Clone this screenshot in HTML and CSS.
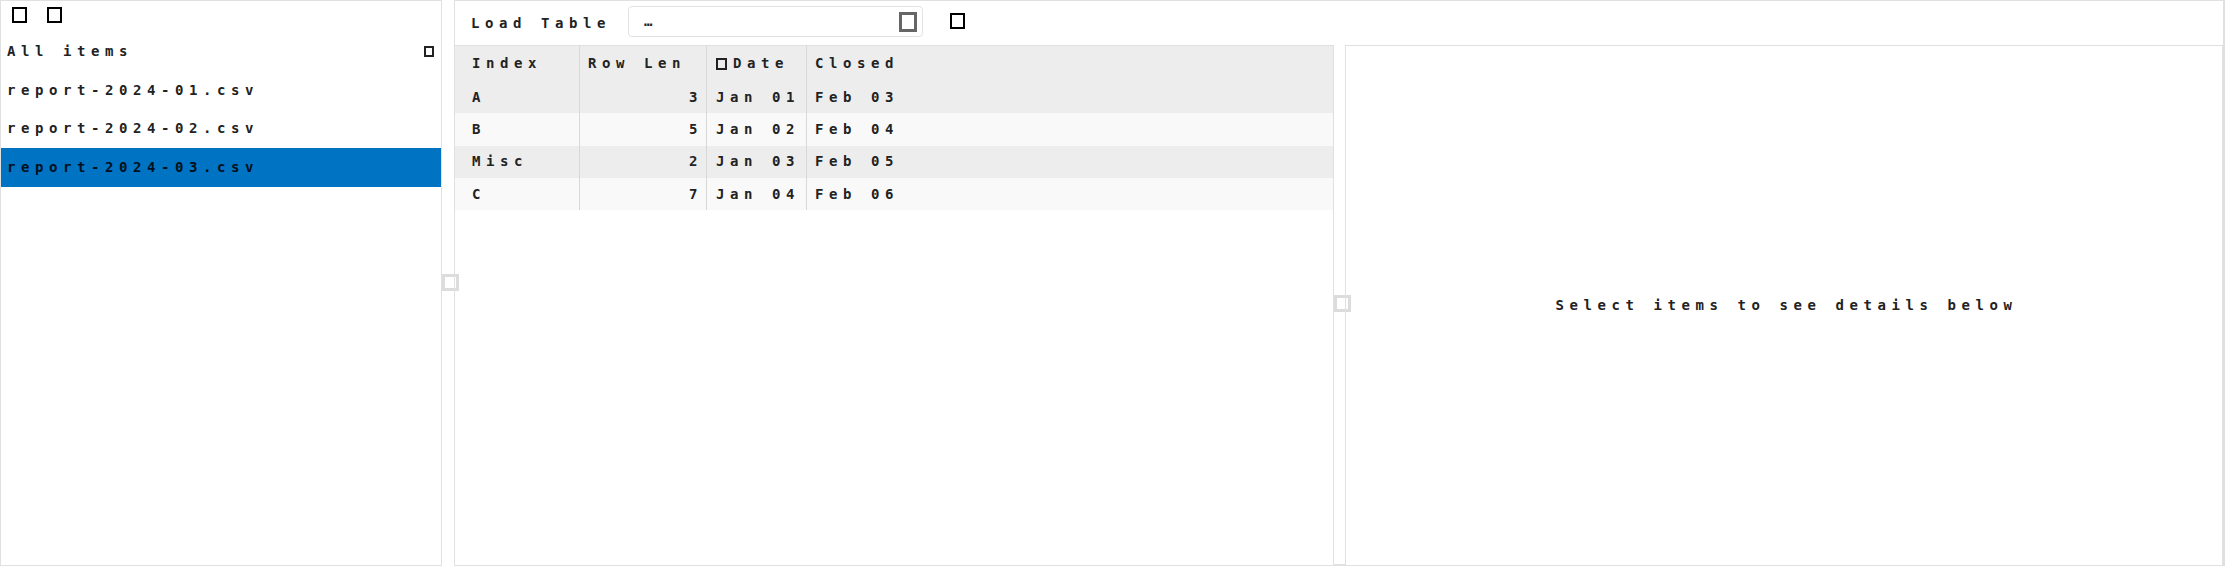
FILE: index.html
```html
<!DOCTYPE html>
<html lang="en">
<head>
<meta charset="utf-8">
<title>Data Browser</title>
<link rel="stylesheet" href="styles.css">
</head>
<body>
<div class="app">
  <aside class="sidebar">
    <div class="side-tools">
      <span class="ico ico-lg"></span>
      <span class="ico ico-lg"></span>
    </div>
    <div class="side-head">
      <span class="txt">All items</span>
      <span class="ico ico-sm"></span>
    </div>
    <ul class="file-list">
      <li class="file"><span class="txt">report-2024-01.csv</span></li>
      <li class="file"><span class="txt">report-2024-02.csv</span></li>
      <li class="file selected"><span class="txt">report-2024-03.csv</span></li>
    </ul>
  </aside>
  <div class="splitter outer"><span class="grip"></span></div>
  <main class="main">
    <div class="toolbar">
      <span class="txt title">Load Table</span>
      <div class="search">
        <span class="txt">…</span>
        <span class="ico ico-clear"></span>
      </div>
      <span class="ico ico-lg"></span>
    </div>
    <div class="panes">
      <section class="table-pane">
        <div class="grid">
          <div class="row head">
            <div class="cell c1"><span class="txt">Index</span></div>
            <div class="cell c2"><span class="txt">Row Len</span></div>
            <div class="cell c3"><span class="ico ico-xs"></span><span class="txt">Date</span></div>
            <div class="cell c4"><span class="txt">Closed</span></div>
          </div>
          <div class="row odd">
            <div class="cell c1"><span class="txt">A</span></div>
            <div class="cell c2 num"><span class="txt">3</span></div>
            <div class="cell c3"><span class="txt">Jan 01</span></div>
            <div class="cell c4"><span class="txt">Feb 03</span></div>
          </div>
          <div class="row even">
            <div class="cell c1"><span class="txt">B</span></div>
            <div class="cell c2 num"><span class="txt">5</span></div>
            <div class="cell c3"><span class="txt">Jan 02</span></div>
            <div class="cell c4"><span class="txt">Feb 04</span></div>
          </div>
          <div class="row odd">
            <div class="cell c1"><span class="txt">Misc</span></div>
            <div class="cell c2 num"><span class="txt">2</span></div>
            <div class="cell c3"><span class="txt">Jan 03</span></div>
            <div class="cell c4"><span class="txt">Feb 05</span></div>
          </div>
          <div class="row even">
            <div class="cell c1"><span class="txt">C</span></div>
            <div class="cell c2 num"><span class="txt">7</span></div>
            <div class="cell c3"><span class="txt">Jan 04</span></div>
            <div class="cell c4"><span class="txt">Feb 06</span></div>
          </div>
        </div>
      </section>
      <div class="splitter inner"><span class="grip"></span></div>
      <section class="detail-pane">
        <span class="txt">Select items to see details below</span>
      </section>
    </div>
  </main>
</div>
</body>
</html>
```
FILE: styles.css
```css
* { box-sizing: border-box; }
html, body { margin: 0; padding: 0; }
body {
  font-family: "DejaVu Sans Mono", monospace;
  font-size: 14px;
  color: #222;
  background: #fff;
  overflow: hidden;
}
.app {
  display: flex;
  height: 566px;
  width: 2225px;
}
.txt {
  line-height: 15px;
  white-space: pre;
  font-weight: 700;
  letter-spacing: 5.57px;
}
.ico { display: inline-block; flex: none; }
.ico-lg { width: 15px; height: 16px; border: 2px solid #000; }
.ico-sm { width: 10px; height: 11px; border: 2px solid #222; }
.ico-xs { width: 11px; height: 12px; border: 2px solid #222; margin-right: 6px; }
.ico-clear { width: 18px; height: 20px; border: 3px solid #666; }

.sidebar {
  width: 442px;
  flex: none;
  border: 1px solid #e0e0e0;
  display: flex;
  flex-direction: column;
}
.side-tools {
  height: 31px;
  display: flex;
  align-items: flex-start;
  gap: 20px;
  padding: 6px 0 0 11px;
}
.side-head {
  height: 39px;
  display: flex;
  align-items: center;
  justify-content: space-between;
  padding: 0 7px 0 6px;
}
.file-list { list-style: none; margin: 0; padding: 0; }
.file {
  height: 38.5px;
  display: flex;
  align-items: center;
  padding-left: 6px;
}
.file.selected {
  background: #0074c2;
  color: #00101c;
}

.splitter {
  flex: none;
  display: flex;
  align-items: center;
  justify-content: center;
}
.splitter.outer { width: 12px; }
.splitter.outer .grip { margin-left: 5px; margin-top: -2px; }
.grip {
  width: 17px;
  height: 17px;
  flex: none;
  border: 3px solid #dcdcdc;
}
.splitter.inner {
  width: 11px;
  border-bottom: 1px solid #e0e0e0;
}
.splitter.inner .grip { margin-left: 5px; margin-top: -3px; }

.main {
  flex: 1;
  border: 1px solid #e0e0e0;
  border-right-width: 2px;
  display: flex;
  flex-direction: column;
  min-width: 0;
}
.toolbar {
  height: 44px;
  flex: none;
  display: flex;
  align-items: center;
  padding-left: 16px;
}
.toolbar .title { margin-right: 17px; }
.search {
  width: 295px;
  height: 31px;
  border: 1px solid #e2e2e2;
  border-radius: 4px;
  display: flex;
  align-items: center;
  justify-content: space-between;
  padding: 0 5px 0 15px;
  margin-right: 27px;
  margin-top: -3px;
}
.toolbar > .ico-lg { margin-top: -5px; }

.panes {
  flex: 1;
  display: flex;
  min-height: 0;
}
.table-pane {
  width: 879px;
  flex: none;
  border-top: 1px solid #e0e0e0;
  border-right: 1px solid #e0e0e0;
}
.grid { display: flex; flex-direction: column; }
.row {
  display: grid;
  grid-template-columns: 125px 127px 100px 1fr;
  height: 32.3px;
}
.row.head { height: 35px; background: #ededed; }
.row.odd { background: #ededed; }
.row.even { background: #f9f9f9; }
.cell {
  display: flex;
  align-items: center;
  padding: 0 10px 0 17px;
  border-right: 1px solid #d8d8d8;
}
.cell.c2 { padding-left: 8px; }
.cell.c3 { padding-left: 9px; }
.cell.c4 { padding-left: 8px; border-right: none; }
.cell.num { justify-content: flex-end; padding-right: 3px; }

.detail-pane {
  flex: 1;
  border: 1px solid #e0e0e0;
  border-bottom: none;
  display: flex;
  align-items: center;
  justify-content: center;
}
.detail-pane .txt { margin-right: -5px; }
```
